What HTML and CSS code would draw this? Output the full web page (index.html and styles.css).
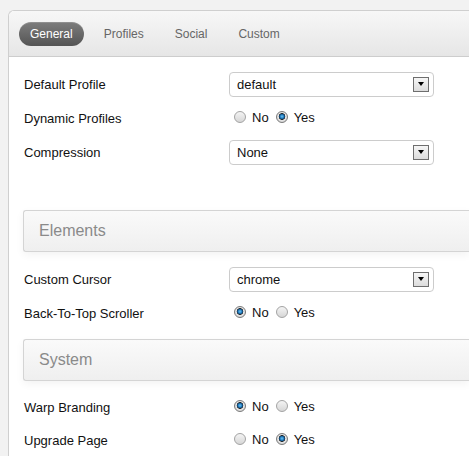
FILE: index.html
```html
<!DOCTYPE html>
<html>
<head>
<meta charset="utf-8">
<link rel="stylesheet" href="styles.css">
</head>
<body>
<div class="panel">
  <div class="tabs">
    <span class="tab active">General</span>
    <span class="tab">Profiles</span>
    <span class="tab">Social</span>
    <span class="tab">Custom</span>
  </div>
  <div class="content">
    <div class="row">
      <span class="lbl">Default Profile</span>
      <div class="select"><span>default</span><i class="arrow"></i></div>
    </div>
    <div class="row">
      <span class="lbl">Dynamic Profiles</span>
      <div class="radios"><i class="radio"></i><span class="opt">No</span><i class="radio on"></i><span class="opt">Yes</span></div>
    </div>
    <div class="row">
      <span class="lbl">Compression</span>
      <div class="select"><span>None</span><i class="arrow"></i></div>
    </div>

    <div class="section first">Elements</div>

    <div class="row">
      <span class="lbl">Custom Cursor</span>
      <div class="select"><span>chrome</span><i class="arrow"></i></div>
    </div>
    <div class="row">
      <span class="lbl">Back-To-Top Scroller</span>
      <div class="radios"><i class="radio on"></i><span class="opt">No</span><i class="radio"></i><span class="opt">Yes</span></div>
    </div>

    <div class="section">System</div>

    <div class="row">
      <span class="lbl">Warp Branding</span>
      <div class="radios"><i class="radio on"></i><span class="opt">No</span><i class="radio"></i><span class="opt">Yes</span></div>
    </div>
    <div class="row last">
      <span class="lbl">Upgrade Page</span>
      <div class="radios"><i class="radio"></i><span class="opt">No</span><i class="radio on"></i><span class="opt">Yes</span></div>
    </div>
  </div>
</div>
</body>
</html>
```

FILE: styles.css
```css
html, body {
  margin: 0;
}
body {
  background: #f2f2f2;
  padding: 10px 0 0 8px;
  height: 456px;
  box-sizing: border-box;
  overflow: hidden;
  font-family: "Liberation Sans", Arial, sans-serif;
}
.panel {
  height: 446px;
  box-sizing: border-box;
  background: #fff;
  border: 1px solid #cfcfcf;
  border-right: 0;
  border-bottom: 0;
  border-radius: 6px 0 0 0;
  overflow: hidden;
}
.tabs {
  height: 45px;
  display: flex;
  align-items: center;
  padding-left: 10px;
  background: linear-gradient(#f7f7f7, #e6e6e6);
  border-bottom: 1px solid #cdcdcd;
  border-radius: 5px 0 0 0;
}
.tab {
  font-size: 12px;
  color: #666;
  height: 24px;
  line-height: 24px;
  padding: 0 11px;
  margin-right: 9px;
  border-radius: 12px;
}
.tab.active {
  background: linear-gradient(#7d7d7d, #545454);
  color: #fff;
  box-shadow: inset 0 1px 0 rgba(255,255,255,0.15);
}
.content {
  padding: 10px 0 0 14px;
}
.row {
  display: flex;
  align-items: center;
  height: 34px;
  padding-left: 1px;
}
.row.last {
  height: 32px;
}
.lbl {
  width: 205px;
  font-size: 13px;
  color: #111;
  padding-top: 1px;
}
.select {
  width: 205px;
  height: 25px;
  box-sizing: border-box;
  border: 1px solid #cccccc;
  border-radius: 4px;
  display: flex;
  align-items: center;
  justify-content: space-between;
  padding: 0 4px 0 7px;
  font-size: 13px;
  color: #111;
}
.arrow {
  width: 16px;
  height: 15px;
  box-sizing: border-box;
  border: 1px solid #6e6e6e;
  background: linear-gradient(#f6f6f6, #dcdcdc);
  display: flex;
  align-items: center;
  justify-content: center;
}
.arrow::after {
  content: "";
  border-top: 4px solid #000;
  border-left: 3.5px solid transparent;
  border-right: 3.5px solid transparent;
}
.radios {
  display: flex;
  align-items: center;
  margin-left: 5px;
  font-size: 13px;
  color: #111;
  margin-top: -2px;
}
.radio {
  width: 12px;
  height: 12px;
  box-sizing: border-box;
  border-radius: 50%;
  border: 1px solid #a3a3a3;
  background: linear-gradient(#f4f4f4, #d6d6d6);
  margin-right: 6px;
}
.radio.on {
  border-color: #7a7a7a;
  background: radial-gradient(circle at 50% 45%, #6cc4f2 0, #2b86c8 1.6px, #124a78 2.6px, #2a2a2a 3.1px, #e8e8e8 3.6px, #d2d2d2 6px);
}
.opt {
  margin-right: 7px;
}
.section {
  height: 42px;
  box-sizing: border-box;
  margin: 9px 0 9px 0;
  border: 1px solid #d4d4d4;
  border-right: 0;
  border-radius: 3px 0 0 3px;
  background: linear-gradient(#fafafa, #efefef);
  box-shadow: 0 3px 8px rgba(0,0,0,0.05);
  padding-left: 15px;
  line-height: 40px;
  font-size: 16px;
  color: #8a8a8a;
}
.section.first {
  margin-top: 41px;
  margin-bottom: 10px;
}
```
